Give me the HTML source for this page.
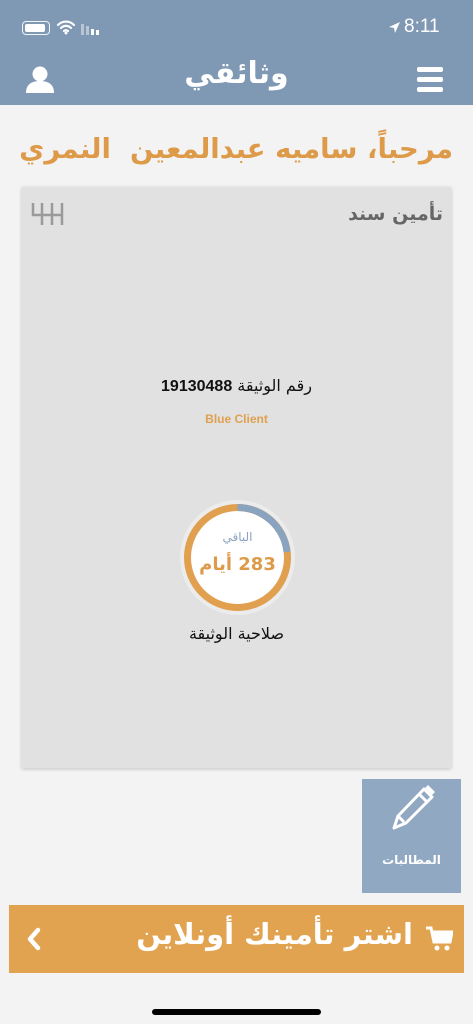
<!DOCTYPE html>
<html><head><meta charset="utf-8"><style>
*{margin:0;padding:0;box-sizing:border-box}
body{width:473px;height:1024px;background:#f3f3f3;font-family:"Liberation Sans","Noto Sans CJK SC",sans-serif;position:relative;overflow:hidden}
.abs{position:absolute}
.hdr{left:0;top:0;width:473px;height:105px;background:#7f98b4}
</style></head><body>
<div class="abs hdr"></div>
<div class="abs" style="left:22px;top:21px;width:28px;height:14px;border:1.5px solid #fff;border-radius:4px;opacity:.9"></div>
<div class="abs" style="left:25px;top:24px;width:20px;height:8px;background:#fff;border-radius:2px"></div>
<svg class="abs" style="left:56px;top:19px" width="20" height="16" viewBox="0 0 20 16"><path d="M2 6a11 11 0 0 1 16 0M5 9a7 7 0 0 1 10 0M8 12a3 3 0 0 1 4 0" stroke="#fff" stroke-width="2.2" fill="none" stroke-linecap="round"/><circle cx="10" cy="14" r="1.5" fill="#fff"/></svg>
<div class="abs" style="left:81px;top:24px;width:3px;height:11px;background:#b7c5d5"></div>
<div class="abs" style="left:86px;top:26px;width:3px;height:9px;background:#b7c5d5"></div>
<div class="abs" style="left:91px;top:29px;width:3px;height:6px;background:#fff"></div>
<div class="abs" style="left:96px;top:30px;width:3px;height:5px;background:#fff"></div>
<svg class="abs" style="left:388px;top:21px" width="13" height="13" viewBox="0 0 13 13"><path d="M12 1L1 6l5 1 1 5z" fill="#fff"/></svg>
<div class="abs" style="left:404px;top:16px;color:#fff;font-size:19px">8:11</div>
<svg class="abs" style="left:25px;top:65px" width="30" height="28" viewBox="0 0 30 28"><circle cx="15" cy="9" r="7.5" fill="#fff"/><path d="M1 28c0-9 6-12 14-12s14 3 14 12z" fill="#fff"/></svg>
<div class="abs" style="left:0;width:473px;top:56px;text-align:center;color:#fff;font-size:30px;font-weight:bold;font-family:'DejaVu Sans',sans-serif">وثائقي</div>
<div class="abs" style="left:417px;top:67px;width:26px;height:5px;background:#fff;border-radius:2px"></div>
<div class="abs" style="left:417px;top:77px;width:26px;height:5px;background:#fff;border-radius:2px"></div>
<div class="abs" style="left:417px;top:87px;width:26px;height:5px;background:#fff;border-radius:2px"></div>
<div class="abs" dir="rtl" style="right:20px;top:133px;color:#dd9a48;font-size:27.5px;font-weight:bold;font-family:'DejaVu Sans',sans-serif;white-space:nowrap;letter-spacing:-0.5px">مرحباً، ساميه عبدالمعين&nbsp; النمري</div>
<div class="abs" style="left:22px;top:187px;width:429px;height:581px;background:#e1e1e1;box-shadow:0 1px 4px rgba(0,0,0,.2)"></div>
<div class="abs" dir="rtl" style="right:30px;top:203px;color:#666;font-size:19px;font-weight:bold;font-family:'DejaVu Sans',sans-serif">تأمين سند</div>
<svg class="abs" style="left:30px;top:199px" width="36" height="32" viewBox="0 0 36 32"><g stroke="#9a9a9a" stroke-width="2.5" fill="none"><path d="M3 4v12h30M12 4v22M22 4v22M32 4v22"/></g></svg>
<div class="abs" dir="rtl" style="left:0;width:473px;top:376px;text-align:center;font-size:16px;color:#111;font-family:'DejaVu Sans',sans-serif">رقم الوثيقة <b style="font-family:'Liberation Sans'">19130488</b></div>
<div class="abs" style="left:0;width:473px;top:412px;text-align:center;font-size:12px;color:#e0a050;font-weight:bold">Blue Client</div>
<div class="abs" style="left:180px;top:500px;width:115px;height:115px;border-radius:50%;background:#ececec"></div>
<svg class="abs" style="left:180px;top:500px" width="115" height="115" viewBox="0 0 115 115">
<circle cx="57.5" cy="57.5" r="50" fill="#fff"/>
<circle cx="57.5" cy="57.5" r="50" fill="none" stroke="#e0a050" stroke-width="7"/>
<path d="M57.5 7.5A50 50 0 0 1 107 52" fill="none" stroke="#8aa3bf" stroke-width="7"/>
</svg>
<div class="abs" style="left:180px;width:115px;top:530px;text-align:center;font-size:12px;color:#8aa3bf;font-family:'DejaVu Sans',sans-serif">الباقي</div>
<div class="abs" dir="rtl" style="left:180px;width:115px;top:554px;text-align:center;font-size:18px;font-weight:bold;color:#dd9a48;font-family:'DejaVu Sans',sans-serif">283 أيام</div>
<div class="abs" dir="rtl" style="left:0;width:473px;top:624px;text-align:center;font-size:16px;color:#111;font-family:'DejaVu Sans',sans-serif">صلاحية الوثيقة</div>
<div class="abs" style="left:362px;top:779px;width:99px;height:114px;background:#90a8c2"></div>
<svg class="abs" style="left:388px;top:784px" width="48" height="48" viewBox="0 0 48 48"><g fill="none" stroke="#fff" stroke-width="3" stroke-linejoin="round"><path d="M36 5l8 8-26 26-12 5 4-12z"/><path d="M10 32l6 6M31 10l8 8"/></g><path d="M37 4l7 7 3-3-7-7z" fill="#fff"/></svg>
<div class="abs" style="left:362px;width:99px;top:853px;text-align:center;color:#fff;font-size:12px;font-weight:bold;font-family:'DejaVu Sans',sans-serif">المطالبات</div>
<div class="abs" style="left:9px;top:905px;width:455px;height:68px;background:#e2a350"></div>
<svg class="abs" style="left:425px;top:925px" width="28" height="28" viewBox="0 0 28 28"><path d="M1 3h5l3 14h16l2-10H8" fill="none" stroke="#fff" stroke-width="3"/><path d="M8 6h19l-2 10H10z" fill="#fff"/><circle cx="12" cy="23" r="2.5" fill="#fff"/><circle cx="22" cy="23" r="2.5" fill="#fff"/></svg>
<div class="abs" dir="rtl" style="right:60px;top:917px;color:#fff;font-size:29px;font-weight:bold;font-family:'DejaVu Sans',sans-serif;white-space:nowrap">اشتر تأمينك أونلاين</div>
<svg class="abs" style="left:25px;top:927px" width="18" height="24" viewBox="0 0 18 24"><path d="M13 3L5 12l8 9" fill="none" stroke="#fff" stroke-width="4.5" stroke-linecap="round" stroke-linejoin="round"/></svg>
<div class="abs" style="left:152px;top:1009px;width:169px;height:6px;background:#000;border-radius:3px"></div>
</body></html>
